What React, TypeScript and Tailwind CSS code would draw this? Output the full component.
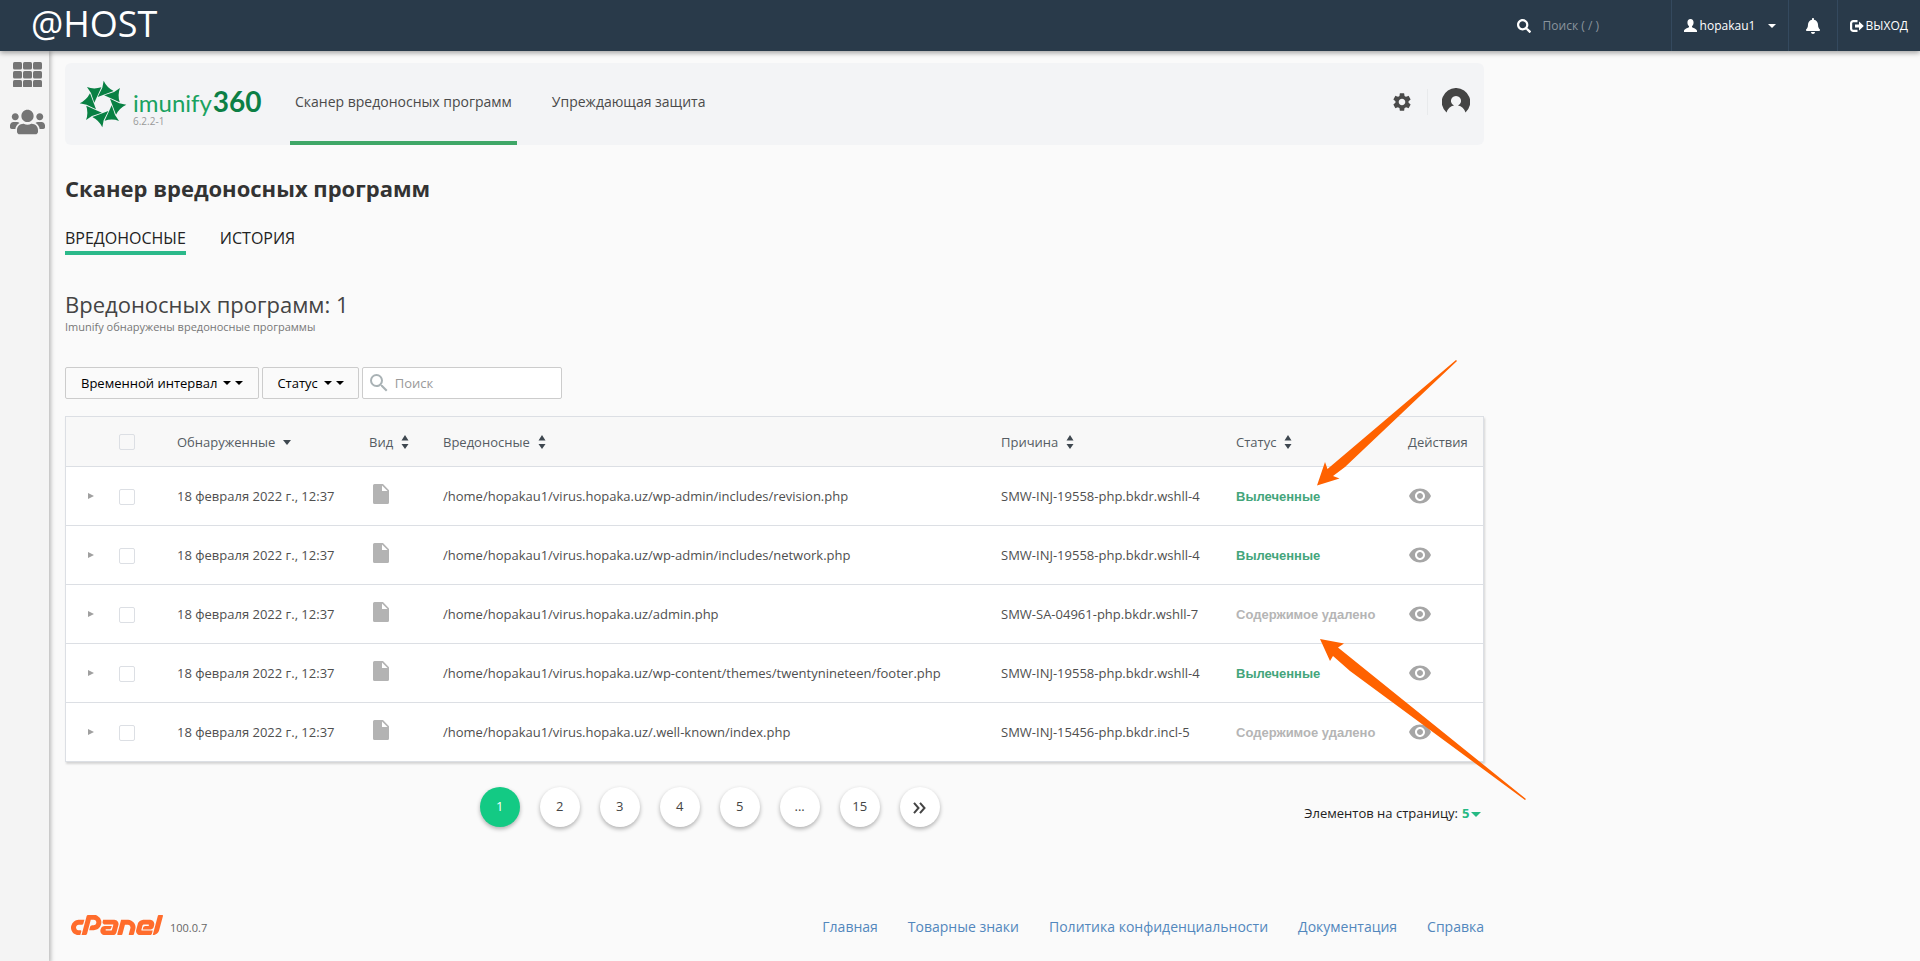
import { FaSearch, FaBell, FaUsers } from "react-icons/fa";
import { MdSettings, MdRemoveRedEye, MdSearch } from "react-icons/md";
import { SiCpanel } from "react-icons/si";

const rows = [
  {
    path: "/home/hopakau1/virus.hopaka.uz/wp-admin/includes/revision.php",
    reason: "SMW-INJ-19558-php.bkdr.wshll-4",
    cured: true,
  },
  {
    path: "/home/hopakau1/virus.hopaka.uz/wp-admin/includes/network.php",
    reason: "SMW-INJ-19558-php.bkdr.wshll-4",
    cured: true,
  },
  {
    path: "/home/hopakau1/virus.hopaka.uz/admin.php",
    reason: "SMW-SA-04961-php.bkdr.wshll-7",
    cured: false,
  },
  {
    path: "/home/hopakau1/virus.hopaka.uz/wp-content/themes/twentynineteen/footer.php",
    reason: "SMW-INJ-19558-php.bkdr.wshll-4",
    cured: true,
  },
  {
    path: "/home/hopakau1/virus.hopaka.uz/.well-known/index.php",
    reason: "SMW-INJ-15456-php.bkdr.incl-5",
    cured: false,
  },
];

const pages = ["1", "2", "3", "4", "5", "...", "15"];

const footerLinks = [
  "Главная",
  "Товарные знаки",
  "Политика конфиденциальности",
  "Документация",
  "Справка",
];

const blades = [0, 45, 90, 135, 180, 225, 270, 315];

function SortIcon() {
  return (
    <svg viewBox="0 0 8 14" className="h-[14px] w-2 fill-[#3f4850]">
      <path d="M4 0 7.500 5.500H.5zM4 14 .5 9h7z" />
    </svg>
  );
}

function Caret() {
  return (
    <svg viewBox="0 0 8 4" className="h-1 w-2 fill-current">
      <path d="M0 0h8L4 4z" />
    </svg>
  );
}

function SortHeader({ label }: { label: string }) {
  return (
    <th className="pt-[2px] text-left font-normal">
      <button className="flex items-center gap-2">
        {label}
        <SortIcon />
      </button>
    </th>
  );
}

function Checkbox({ label }: { label: string }) {
  return (
    <input
      type="checkbox"
      aria-label={label}
      className="block h-4 w-4 appearance-none rounded-xs border border-[#dcdfe4]"
    />
  );
}

function TopBar() {
  return (
    <header className="relative z-10 flex h-[51px] items-stretch bg-[#293a4a] text-white shadow-[0_2px_5px_rgba(0,0,0,0.35)]">
      <a href="#" className="pl-[31px] text-4xl leading-[48px] font-medium">
        @HOST
      </a>
      <div className="ml-auto flex items-stretch text-xs font-medium">
        <label className="flex items-center gap-3">
          <FaSearch className="h-[14px] w-[14px]" />
          <input
            type="text"
            aria-label="Поиск"
            placeholder="Поиск ( / )"
            className="w-[128px] bg-transparent pt-px font-normal outline-none placeholder:text-[#8a949d]"
          />
        </label>
        <button className="flex w-[117px] items-center border-l border-[#34495e] pl-3">
          <svg viewBox="0 0 14 14" className="h-[13px] w-[13px] fill-white">
            <path d="M7 0C4.800 0 3.700 1.500 3.700 3.700c0 1.700.7 3.200 1.700 4v1.200C3.500 9.900 0 11 0 12.800V14h14v-1.200c0-1.800-3.500-2.900-5.400-3.900V7.700c1-.8 1.700-2.300 1.700-4C10.300 1.500 9.200 0 7 0z" />
          </svg>
          <span className="ml-[3px]">hopakau1</span>
          <span className="ml-[13px]">
            <Caret />
          </span>
        </button>
        <button
          aria-label="Уведомления"
          className="flex w-[49px] items-center justify-center border-l border-[#34495e]"
        >
          <FaBell className="h-4 w-4" />
        </button>
        <button className="flex items-center gap-[2px] border-l border-[#34495e] px-3">
          <svg viewBox="0 0 14 12" className="h-3 w-[14px]">
            <path
              d="M7.500 1.100H3.500A2.300 2.300 0 0 0 1.100 3.500v5a2.300 2.300 0 0 0 2.400 2.400h4"
              fill="none"
              stroke="white"
              strokeWidth="2.200"
            />
            <path d="M9 1.500 13.800 6 9 10.500V7.600H5V4.400h4z" fill="white" />
          </svg>
          ВЫХОД
        </button>
      </div>
    </header>
  );
}

function Sidebar() {
  return (
    <aside className="flex w-[49px] shrink-0 flex-col items-end border-b border-[#d5d5d5] bg-[#f4f4f4] pt-[11px] text-[#757575] shadow-[2px_0_4px_rgba(0,0,0,0.25)]">
      <a href="#" aria-label="Инструменты" className="mr-[7px]">
        <svg viewBox="0 0 29 25" className="h-[25px] w-[29px] fill-current">
          {[0, 9, 18].map((y) =>
            [0, 10, 20].map((x) => (
              <rect key={`${x}-${y}`} x={x} y={y} width="9" height="7.500" rx="1.500" />
            ))
          )}
        </svg>
      </a>
      <a href="#" aria-label="Пользователи" className="mt-[21px] mr-1">
        <FaUsers className="h-[28px] w-[35px]" />
      </a>
    </aside>
  );
}

function ImunifyLogo() {
  return (
    <a href="#" className="flex w-[225px] items-center pl-[14px]">
      <svg viewBox="-72 -72 144 144" className="h-12 w-12 fill-[#088043]">
        {blades.map((angle) => (
          <path
            key={angle}
            d="M2-70Q11-50 32-39L-16-21-2-49z"
            transform={`rotate(${angle})`}
          />
        ))}
      </svg>
      <span className="flex flex-col pt-2 pl-[6px]">
        <span className="flex items-baseline gap-px font-['Lato',sans-serif]">
          <span className="text-2xl leading-6 text-[#1aa260]">imunify</span>
          <span className="text-[28px] leading-6 font-bold text-[#0c7f45]">360</span>
        </span>
        <span className="text-[10px] leading-3 text-[#999]">6.2.2-1</span>
      </span>
    </a>
  );
}

function Navigation() {
  return (
    <nav className="flex h-[82px] items-stretch rounded-md bg-[#f3f4f6] text-sm text-[#4a4a4a]">
      <ImunifyLogo />
      <a href="#" className="border-b-4 border-[#3fa767] px-[5px] pt-[29px] leading-5">
        Сканер вредоносных программ
      </a>
      <a href="#" className="ml-[30px] px-[5px] pt-[29px] leading-5">
        Упреждающая защита
      </a>
      <div className="ml-auto flex items-center pr-[14px] pb-[5px]">
        <button aria-label="Настройки">
          <MdSettings className="h-[22px] w-[22px]" />
        </button>
        <span className="ml-[14px] h-[26px] w-px bg-[#e8eaec]" />
        <button aria-label="Профиль" className="ml-[14px]">
          <svg viewBox="0 0 28 28" className="h-7 w-7">
            <path
              d="M14 0a14 14 0 0 0-9.500 24.500Q6.500 18.500 12 17.500a5 5 0 1 1 4 0q5.500 1 7.500 7A14 14 0 0 0 14 0z"
              fill="#444"
            />
          </svg>
        </button>
      </div>
    </nav>
  );
}

function Filters() {
  return (
    <div className="mt-8 flex gap-[3px] text-[13px]">
      <button className="flex h-8 items-center gap-1 rounded-xs border border-[#ccc] px-[15px] text-black">
        <span className="pt-px pr-[2px]">Временной интервал</span>
        <Caret />
        <Caret />
      </button>
      <button className="flex h-8 items-center gap-1 rounded-xs border border-[#ccc] px-[14px] text-black">
        <span className="pt-px pr-[2px]">Статус</span>
        <Caret />
        <Caret />
      </button>
      <label className="flex h-8 w-[200px] items-center gap-1 rounded-xs border border-[#ccc] bg-white pl-1">
        <MdSearch className="h-6 w-6 shrink-0 text-[#a9b2b5]" />
        <input
          type="text"
          aria-label="Поиск по таблице"
          placeholder="Поиск"
          className="min-w-0 flex-1 pt-px outline-none placeholder:text-[#999]"
        />
      </label>
    </div>
  );
}

function MalwareTable() {
  return (
    <div className="mt-[17px] border border-[#dcdfe4] bg-white shadow-[1px_2px_2px_rgba(0,0,0,0.15)]">
      <table className="w-full table-fixed border-collapse text-[13px] text-[#4f4f4f]">
        <colgroup>
          <col className="w-[53px]" />
          <col className="w-[58px]" />
          <col className="w-[192px]" />
          <col className="w-[74px]" />
          <col />
          <col className="w-[235px]" />
          <col className="w-[172px]" />
          <col className="w-[75px]" />
        </colgroup>
        <thead>
          <tr className="h-[49px] border-b border-[#dcdfe4] bg-[#f8f8f8] text-[#555c63]">
            <th />
            <th className="pt-[2px]">
              <Checkbox label="Выбрать все" />
            </th>
            <th className="pt-[2px] text-left font-normal">
              <button className="flex items-center gap-2">
                Обнаруженные
                <svg viewBox="0 0 8 5" className="h-[5px] w-2 fill-[#3f4850]">
                  <path d="M0 0h8L4 5z" />
                </svg>
              </button>
            </th>
            <SortHeader label="Вид" />
            <SortHeader label="Вредоносные" />
            <SortHeader label="Причина" />
            <SortHeader label="Статус" />
            <th className="pt-[2px] text-left font-normal">Действия</th>
          </tr>
        </thead>
        <tbody>
          {rows.map((row) => (
            <tr key={row.path} className="h-[59px] border-b border-[#dcdfe4] last:border-b-0">
              <td className="pl-[22px]">
                <button aria-label="Развернуть" className="block">
                  <svg viewBox="0 0 6 6" className="h-[6px] w-[6px] fill-[#a0a0a0]">
                    <path d="M0 0 6 3 0 6z" />
                  </svg>
                </button>
              </td>
              <td className="pt-[2px]">
                <Checkbox label={row.path} />
              </td>
              <td className="pt-[2px]">18 февраля 2022 г., 12:37</td>
              <td>
                <svg viewBox="0 0 16 20" className="mb-1 ml-1 h-5 w-4">
                  <path
                    d="M1.500 0H10l6 6.200V18.500a1.500 1.500 0 0 1-1.500 1.500h-13A1.500 1.500 0 0 1 0 18.500v-17A1.500 1.500 0 0 1 1.500 0z"
                    fill="#b3b3b3"
                  />
                  <path d="M9 1.500V7h5.500z" fill="white" />
                </svg>
              </td>
              <td className="pt-[2px]">{row.path}</td>
              <td className="pt-[2px]">{row.reason}</td>
              <td className="pt-[2px]">
                {row.cured ? (
                  <span className="font-['Liberation_Sans',sans-serif] font-bold text-[#44a57b]">
                    Вылеченные
                  </span>
                ) : (
                  <span className="font-['Liberation_Sans',sans-serif] font-bold text-[#b5b5b5]">
                    Содержимое удалено
                  </span>
                )}
              </td>
              <td>
                <button aria-label="Просмотр" className="block">
                  <MdRemoveRedEye className="h-6 w-6 text-[#a6a6a6]" />
                </button>
              </td>
            </tr>
          ))}
        </tbody>
      </table>
    </div>
  );
}

function Pagination() {
  return (
    <div className="mt-[25px] flex items-center text-[13px]">
      <div className="flex flex-1 justify-center gap-5 pl-[50px] text-[#444]">
        {pages.map((page) => (
          <button
            key={page}
            className={
              page === "1"
                ? "h-10 w-10 rounded-full bg-[#13ca84] text-white shadow-[0_2px_4px_rgba(0,0,0,0.3)]"
                : "h-10 w-10 rounded-full bg-white shadow-[0_2px_4px_rgba(0,0,0,0.3)]"
            }
          >
            {page}
          </button>
        ))}
        <button
          aria-label="Последняя страница"
          className="flex h-10 w-10 items-center justify-center rounded-full bg-white shadow-[0_2px_4px_rgba(0,0,0,0.3)]"
        >
          <svg viewBox="0 0 13 12" className="mt-[2px] h-3 w-[13px]">
            <path d="M1 .8 5.500 6 1 11.200M7 .8 11.500 6 7 11.200" fill="none" stroke="#444" strokeWidth="2" />
          </svg>
        </button>
      </div>
      <label className="flex items-center pt-[14px] pr-[3px] text-[#222]">
        Элементов на страницу:
        <select className="ml-1 w-2 appearance-none font-bold text-[#26b983] outline-none">
          <option>5</option>
        </select>
        <svg viewBox="0 0 10 5" className="ml-px h-[5px] w-[10px] fill-[#26b983]">
          <path d="M0 0h10L5 5z" />
        </svg>
      </label>
    </div>
  );
}

function Footer() {
  return (
    <footer className="mt-[88px] flex items-center pb-6 text-sm leading-5">
      <a href="#" aria-label="cPanel" className="ml-[6px] pb-1 text-[#ff6c2c]">
        <SiCpanel viewBox="0 9.400 24 5.200" className="h-5 w-[92px]" />
      </a>
      <span className="ml-[7px] pt-[2px] text-[11px] text-[#666]">100.0.7</span>
      <ul className="ml-auto flex gap-[30px] text-[#5287bd]">
        {footerLinks.map((link) => (
          <li key={link}>
            <a href="#">{link}</a>
          </li>
        ))}
      </ul>
    </footer>
  );
}

// annotation arrows drawn over the table
function Arrows() {
  return (
    <svg
      viewBox="0 0 210 441"
      className="pointer-events-none absolute top-[360px] left-[1316px] z-20 h-[441px] w-[210px] fill-[#ff6200]"
    >
      <path d="M1 125.500 9 102 11.500 109 140 0 141 1 29 107 17 116 23.500 118.500z" />
      <path d="M4 279 28 283.500 22 287.500 210 439 209 440 34 311 17 296 14 301z" />
    </svg>
  );
}

export default function App() {
  return (
    <div className="relative flex min-h-screen flex-col overflow-x-hidden bg-[#fafafa] font-['Open_Sans',sans-serif]">
      <TopBar />
      <div className="flex flex-1">
        <Sidebar />
        <main className="min-w-0 flex-1 px-4 pt-3">
          <div className="max-w-[1419px]">
            <Navigation />
            <h1 className="mt-[29px] text-[22px] leading-7 font-bold text-[#333]">
              Сканер вредоносных программ
            </h1>
            <div className="mt-6 flex gap-[34px] text-base leading-6 text-[#222]">
              <a href="#" className="border-b-4 border-[#2bb98a] pb-px">
                ВРЕДОНОСНЫЕ
              </a>
              <a href="#">ИСТОРИЯ</a>
            </div>
            <h2 className="mt-[35px] text-[22px] leading-7 text-[#444]">Вредоносных программ: 1</h2>
            <p className="pt-px text-[11px] leading-4 text-[#777]">
              Imunify обнаружены вредоносные программы
            </p>
            <Filters />
            <MalwareTable />
            <Pagination />
            <Footer />
          </div>
        </main>
      </div>
      <Arrows />
    </div>
  );
}
